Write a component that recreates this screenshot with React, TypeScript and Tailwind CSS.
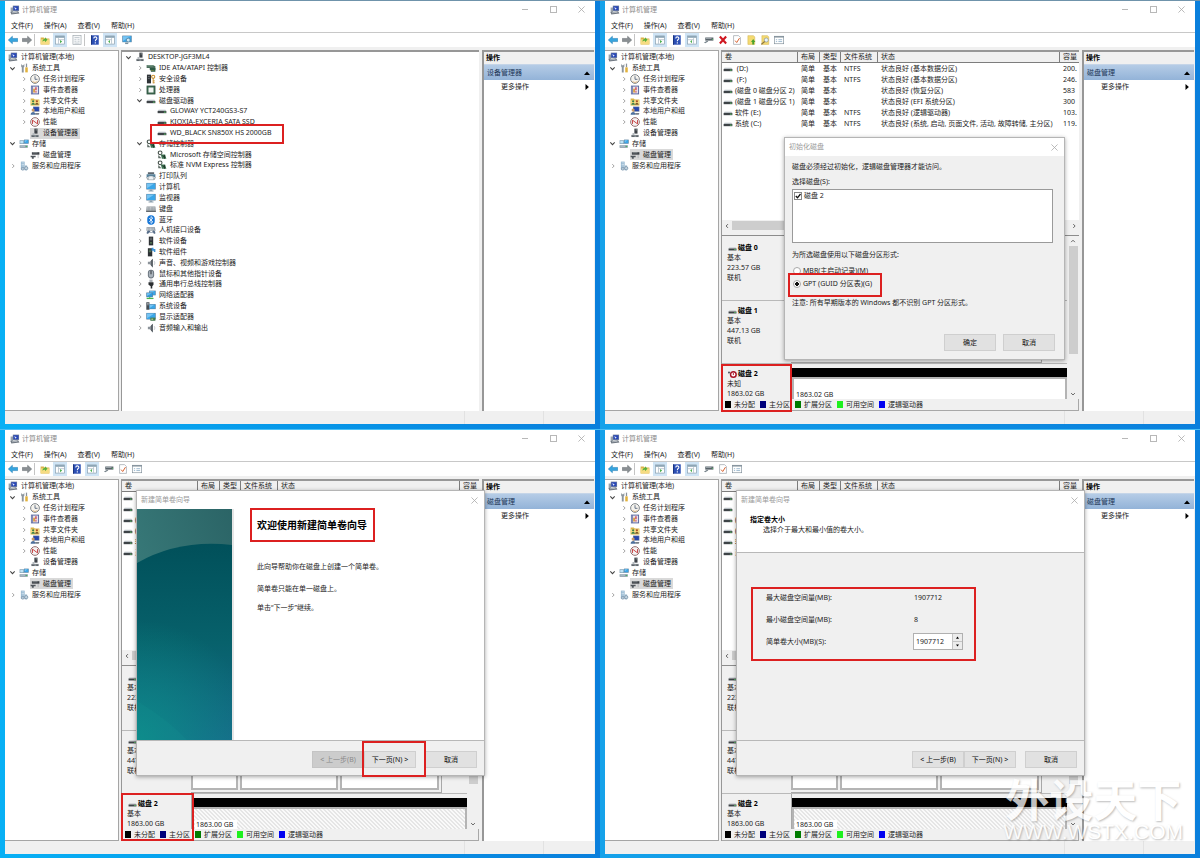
import React, { useId, useState } from "react";

type Kids = { children?: React.ReactNode };

/* ---------- icons ---------- */

const screen = (x: number, y: number, w: number, h: number, fill = "#3aa6e8") => (
  <>
    <rect x={x} y={y} width={w} height={h} fill="#5b7f9c" />
    <rect x={x + 0.8} y={y + 0.8} width={w - 1.6} height={h - 1.6} fill={fill} />
    <path d={`M${x + 1} ${y + h - 2}L${x + w - 2} ${y + 1}H${x + 1}z`} fill="#9ed8fa" opacity=".6" />
  </>
);

const folder = (
  <>
    <path d="M1 4h5l1.500 1.500H15V15H1z" fill="#d9b44a" />
    <path d="M1 7h14v8H1z" fill="#f6dc82" />
  </>
);

const paneWindow = (accent: string, flip: boolean) => (
  <>
    <rect x="1" y="1.500" width="14" height="13" fill="#fff" stroke="#8298a8" />
    <rect x="1" y="1.500" width="14" height="3" fill="#8ea6b6" />
    <path d={flip ? "M10.500 5v9M1 7.500h9" : "M5.500 5v9M6 7.500h9"} stroke="#9aabb8" />
    <path d={flip ? "M8 8l-3 2.500 3 2.500z" : "M8 8l3.500 2.500L8 13z"} fill={accent} />
  </>
);

const icons: Record<string, React.ReactNode> = {
  computer: (
    <>
      <path d="M1 4h4v9H1z" fill="#9aa3ab" />
      <rect x="4.500" y="1" width="10" height="8.500" fill="#6d7c98" />
      <rect x="5.500" y="2" width="8" height="6.500" fill="#2847b8" />
      <path d="M7 3l4 3-2 .5L8.500 8z" fill="#e8eefc" />
      <path d="M1 11l12-1 2 3.500-13 1.500z" fill="#6e7680" />
      <path d="M3 12.500l9-.8" stroke="#d7dde2" />
    </>
  ),
  tools: (
    <>
      <path d="M3.500 1v5l1 1V15H7.500V7l1-1V1L7 3.500H5z" fill="#8b949c" />
      <path d="M11 1h2v6h-2z" fill="#8b9299" />
      <path d="M10 7h4v8h-4z" fill="#e2b23c" />
    </>
  ),
  clock: (
    <>
      <circle cx="8" cy="8" r="7" fill="#f5f3ee" stroke="#80868b" strokeWidth="1.600" />
      <path d="M8 3.500V8.500h4" fill="none" stroke="#4b5b74" strokeWidth="1.300" />
      <path d="M4 12a6 6 0 0 0 8 0" stroke="#d89c50" fill="none" />
    </>
  ),
  event: (
    <>
      <rect x="1.500" y="1" width="13" height="14" fill="#57629c" />
      <rect x="4.500" y="2.500" width="8.500" height="11" fill="#e6e4ee" />
      <path d="M9.500 3.500v5M9.500 10v2" stroke="#cc3340" strokeWidth="2" />
      <path d="M5 12h3V6H5z" fill="#d8a048" />
      <path d="M3 2v12" stroke="#b9c0df" />
    </>
  ),
  share: (
    <>
      {folder}
      <circle cx="5" cy="8.500" r="1.800" fill="#3c7f46" />
      <path d="M2 14c0-4 6-4 6 0z" fill="#3c7f46" />
      <circle cx="11" cy="8.500" r="1.800" fill="#a85028" />
      <path d="M8 14c0-4 6-4 6 0z" fill="#7a5a2a" />
    </>
  ),
  users: (
    <>
      <rect x="5" y="1" width="10" height="8" fill="#5d6e96" />
      <rect x="6" y="2" width="8" height="6" fill="#2746ae" />
      <circle cx="5" cy="6.500" r="2.500" fill="#c89a68" />
      <path d="M1 14c0-6 8-6 8 0z" fill="#4d6f9c" />
      <path d="M8 11h7l-1 3H9z" fill="#777f88" />
    </>
  ),
  perf: (
    <>
      <circle cx="8" cy="8" r="7" fill="#f4f2f2" stroke="#8b6060" strokeWidth="1.400" />
      <path d="M4 11V5l8 6V5" fill="none" stroke="#c43d3d" strokeWidth="1.500" />
    </>
  ),
  device: (
    <>
      <rect x="7" y="1" width="5" height="8" fill="#3d4247" />
      <path d="M9 3h2" stroke="#c9ced2" />
      <path d="M2 11h12v3.500H2z" fill="#8a9197" />
      <path d="M4 8h3v4H4z" fill="#b4babf" />
      <path d="M3 13h4M10 13h3" stroke="#3a3f44" strokeWidth="1.300" />
    </>
  ),
  storage: (
    <>
      <path d="M1 2h7v6H1z" fill="#7f9db2" />
      <path d="M2 3h5v4H2z" fill="#bfe3f5" />
      {screen(8, 1, 7.500, 6.500)}
      <path d="M1 10h13v4H1z" fill="#7c8f9c" />
      <path d="M2 11.500h8" stroke="#dff0f7" />
      <path d="M11 12h2" stroke="#43c455" strokeWidth="1.500" />
    </>
  ),
  diskmgmt: (
    <>
      <path d="M3 3.500h12v4H3z" fill="#3c4146" />
      <path d="M4 4.500h8" stroke="#a9b0b6" />
      <path d="M1 9h8v2.500H6V14H3v-2.500H1z" fill="#50565c" />
      <path d="M13 8v5" stroke="#9aa1a7" />
    </>
  ),
  services: (
    <>
      <path d="M3 1h6v13H3z" fill="#8fb2cc" />
      <path d="M4 3h4M4 5.500h4M4 8h4" stroke="#e9f4fb" />
      <path d="M9 7h4v8H9z" fill="#a9c0d2" />
      <circle cx="11.500" cy="11.500" r="2.600" fill="#c3d5e2" stroke="#7b95aa" strokeWidth="1.300" />
      <circle cx="6" cy="12.500" r="2.300" fill="#b4c7d6" stroke="#7b95aa" />
    </>
  ),
  ide: (
    <>
      <path d="M1 3h10l4 2v6H6V8H1z" fill="#4a6d5b" />
      <path d="M2 4.500h9" stroke="#a8c9b6" />
      <path d="M6 8h9v6H8z" fill="#2d5a45" />
      <path d="M8 12h6" stroke="#c2b04a" strokeDasharray="1 1" />
    </>
  ),
  security: (
    <>
      <rect x="1.500" y="1" width="6.500" height="14" fill="#2f3337" />
      <path d="M3 4h3M3 7h3" stroke="#8b9298" />
      <circle cx="11.500" cy="4.500" r="2.500" fill="none" stroke="#c98f2e" strokeWidth="1.700" />
      <path d="M11.500 7v8M11.500 11h2.500M11.500 14h2.500" stroke="#c98f2e" strokeWidth="1.500" />
    </>
  ),
  cpu: (
    <>
      <rect x="1.500" y="1.500" width="13" height="13" fill="#3d6a50" stroke="#28493a" />
      <rect x="4" y="4" width="8" height="8" fill="#f1f4f2" />
    </>
  ),
  disk: (
    <>
      <path d="M2.500 6h11l1.500 2H1z" fill="#b9bfc4" />
      <path d="M1 8h14v3.500H1z" fill="#3e4347" />
      <path d="M11 9.800h3" stroke="#5fd06d" strokeWidth="1.400" />
    </>
  ),
  diskBad: (
    <>
      <path d="M0 3h4v3H0z" fill="#59606a" />
      <circle cx="9.500" cy="8" r="5" fill="#fff" stroke="#a81426" strokeWidth="2.600" />
      <path d="M9.500 5v4" stroke="#a81426" strokeWidth="1.600" />
    </>
  ),
  controller: (
    <>
      <circle cx="5" cy="4.500" r="3" fill="none" stroke="#44504a" strokeWidth="1.700" />
      <path d="M2 8l5 5h-5z" fill="#5c6a63" />
      <path d="M6 7h7l2 7H8z" fill="#3f7353" />
      <path d="M9 9l4 3M12 8v6" stroke="#1c3327" strokeWidth="1.300" />
    </>
  ),
  printer: (
    <>
      <path d="M3 2h10v3H3z" fill="#5d666e" />
      <path d="M1 5h14v5h-2.500L11 8H5l-1.500 2H1z" fill="#57819a" />
      <path d="M5 8h6l1.500 6h-9z" fill="#eef3f6" stroke="#7b878f" strokeWidth=".8" />
      <path d="M1 10l2 4M15 10l-2 4" stroke="#4b555c" />
    </>
  ),
  monitor: (
    <>
      {screen(0.5, 1.5, 15, 10.5)}
      <path d="M6 12h4v1.500h2V15H4v-1.500h2z" fill="#8fa2b0" />
    </>
  ),
  keyboard: (
    <>
      <path d="M1 4h14l.8 8H.2z" fill="#8d949a" />
      <path d="M2 5.500h12M2 7.500h12M2 9.500h12" stroke="#e4e8eb" strokeDasharray="1.600 .6" />
      <path d="M.2 11h15.600v1.500H.2z" fill="#4c5257" />
    </>
  ),
  bluetooth: (
    <>
      <rect x="2" y=".5" width="12" height="15" rx="6" fill="#1878d8" />
      <path d="M5 5l6 6-3 2.500V2.500L11 5l-6 6" fill="none" stroke="#fff" strokeWidth="1.200" />
    </>
  ),
  hid: (
    <>
      <path d="M1 3h13l1.500 6H.5z" fill="#9aa3ab" />
      <path d="M2 5h11M2 7h11" stroke="#eceff1" strokeDasharray="1.400 .8" />
      <path d="M1 13c0-6 6-5 6-2h3c0-3 5-4 5 2-1 2-3 1-3.500-1H5C4 14 2 15 1 13z" fill="#566c88" />
    </>
  ),
  box: (
    <>
      <rect x="4.500" y="1" width="7" height="14" fill="#2c3034" />
      <path d="M6 3.500h4M6 6h4" stroke="#949ba1" />
      <rect x="7" y="10" width="2" height="2" fill="#77b46d" />
    </>
  ),
  component: (
    <>
      <rect x="3" y="2" width="7" height="13" fill="#2c3034" />
      <path d="M4.500 5h4M4.500 7.500h4" stroke="#7bb07a" />
      <path d="M9 1h3v2h3v5h-2.500V6H9z" fill="#3b92d6" />
    </>
  ),
  speaker: (
    <>
      <path d="M3 6h3l5-5v14l-5-5H3z" fill="#8c939a" />
      <path d="M8 4l3-3v14l-3-3z" fill="#5b6268" />
      <path d="M13 5c1.500 2 1.500 4 0 6" stroke="#a9b0b6" fill="none" />
    </>
  ),
  mouse: (
    <>
      <rect x="3" y="1" width="10" height="14" rx="5" fill="#69737d" />
      <rect x="4.500" y="2.500" width="7" height="11" rx="3.500" fill="#aab3bc" />
      <path d="M8 2.500v6" stroke="#353b41" strokeWidth="1.700" />
    </>
  ),
  usb: (
    <>
      <rect x="5.500" y="1" width="5" height="4" fill="#a8aeb4" />
      <path d="M4 5h8v4l-2 2.500v3.500H7.500v-3.500L4 9z" fill="#2b2e31" />
    </>
  ),
  network: (
    <>
      {screen(5, 1, 10.5, 7.5)}
      {screen(0.5, 4, 10.5, 7.5, "#2f9be0")}
      <path d="M1 13.500h11" stroke="#4cb34f" strokeWidth="2" />
      <path d="M6 11v2.500" stroke="#4cb34f" strokeWidth="1.500" />
    </>
  ),
  system: (
    <>
      <rect x=".5" y="2" width="5" height="12" fill="#454c52" />
      <path d="M1.500 4h3M1.500 6h3" stroke="#c3cad0" />
      {screen(5, 5, 10.5, 8)}
    </>
  ),
  display: (
    <>
      {screen(0.5, 1.5, 15, 10.5)}
      <path d="M7 9h8v5H7z" fill="#447a4b" />
      <path d="M8.500 11.500h3" stroke="#cfe6b7" strokeWidth="1.500" />
    </>
  ),
  back: <path d="M.5 8L7 2v3.500h8.500v5H7V14z" fill="#36a4de" stroke="#1b78b0" strokeWidth=".8" />,
  forward: <path d="M15.500 8L9 2v3.500H.5v5H9V14z" fill="#8a8f93" stroke="#63686c" strokeWidth=".8" />,
  folderUp: (
    <>
      {folder}
      <path d="M4 11c0-4 2-5 4-5V3.500l4 4-4 4V9c-2 0-3 0-4 2z" fill="#5bb03a" />
    </>
  ),
  paneLeft: paneWindow("#4caf50", false),
  paneRight: paneWindow("#4caf50", true),
  properties: (
    <>
      <rect x="1.500" y="1" width="13" height="14" fill="#f6f7f8" stroke="#98a1a8" />
      <path d="M4 4h8M4 7h3M9 7h3M4 10h3M9 10h3M4 13h8" stroke="#a8b4bd" />
    </>
  ),
  help: (
    <>
      <rect x="2" y=".5" width="12" height="15" fill="#2c4fb4" />
      <path d="M2.500 .5v15" stroke="#17307c" strokeWidth="1.600" />
      <path d="M6 5.500c0-3.300 5-3.200 5-.3C11 7.500 8.500 7 8.500 10M8.500 11.500v2" fill="none" stroke="#fff" strokeWidth="1.700" />
    </>
  ),
  scan: (
    <>
      {screen(0.5, 1, 15, 10.5)}
      <circle cx="10" cy="8" r="3" fill="#cdeaf9" stroke="#52738a" />
      <path d="M5 12h5v2.500H5z" fill="#79909f" />
    </>
  ),
  drive: (
    <>
      <path d="M2 4h13v5H2z" fill="#59636a" />
      <path d="M3 5.500h9" stroke="#c6cdd2" />
      <path d="M13 7h1.500" stroke="#55c766" strokeWidth="1.500" />
      <path d="M0 12l5-3 2 1.500L2 13z" fill="#77838b" />
    </>
  ),
  cross: <path d="M3 2.500l10 11M13 2.500l-10 11" stroke="#cf1720" strokeWidth="3.400" />,
  checkDoc: (
    <>
      <path d="M2.500 1h8l3 3v11h-11z" fill="#fff" stroke="#9299a0" />
      <path d="M5 9l2.500 3L12 5" fill="none" stroke="#d9622e" strokeWidth="1.600" />
    </>
  ),
  sheetUp: (
    <>
      <path d="M3 1h9l2 2v12H3z" fill="#f4da72" stroke="#d3b14c" strokeWidth=".8" />
      <path d="M10 15V11H8l3.500-4.500L15 11h-2v4z" fill="#4aa32c" />
    </>
  ),
  sheetFind: (
    <>
      <path d="M3 1h9l2 2v12H3z" fill="#f4da72" stroke="#d3b14c" strokeWidth=".8" />
      <circle cx="10" cy="8" r="3.300" fill="#e7f4fb" stroke="#7e8b94" />
      <path d="M7.500 10.500L2 15" stroke="#8d7640" strokeWidth="2" />
    </>
  ),
  listWindow: (
    <>
      <rect x=".5" y="2" width="15" height="12" fill="#fff" stroke="#7b8a95" />
      <path d="M.5 3h15" stroke="#7b8a95" strokeWidth="2" />
      <path d="M3 7.500h2M3 10.500h2M7 7.500h6M7 10.500h6" stroke="#6a93b4" />
    </>
  ),
};

function Icon({ name, className = "w-[10px] h-[10px]" }: { name: string; className?: string }) {
  return (
    <svg viewBox="0 0 16 16" aria-hidden="true" className={`shrink-0 ${className}`}>
      {icons[name]}
    </svg>
  );
}

function Arrow({ dir, className = "w-[6px] h-[6px]" }: { dir: "up" | "down" | "left" | "right"; className?: string }) {
  const d = {
    up: "M1.500 5.500L4 3l2.500 2.500",
    down: "M1.500 2.800L4 5.300l2.500-2.500",
    left: "M5.300 1.500L2.800 4l2.500 2.500",
    right: "M3 1.500L5.500 4 3 6.500",
  }[dir];
  return (
    <svg viewBox="0 0 8 8" aria-hidden="true" className={`shrink-0 ${className}`}>
      <path d={d} fill="none" stroke="currentColor" strokeWidth="1.200" />
    </svg>
  );
}

function CloseGlyph() {
  return (
    <svg viewBox="0 0 8 8" aria-hidden="true" className="h-[7px] w-[7px]">
      <path d="M.5 .5l7 7M7.500 .5l-7 7" stroke="currentColor" strokeWidth=".9" />
    </svg>
  );
}

/* ---------- trees ---------- */

type Node = { icon: string; text: string; level: 0 | 1 | 2 | 3; state?: "open" | "closed" };

const indent = ["pl-[2px]", "pl-[3px]", "pl-[14px]", "pl-[25px]"];

const consoleTree: Node[] = [
  { icon: "computer", text: "计算机管理(本地)", level: 0 },
  { icon: "tools", text: "系统工具", level: 1, state: "open" },
  { icon: "clock", text: "任务计划程序", level: 2, state: "closed" },
  { icon: "event", text: "事件查看器", level: 2, state: "closed" },
  { icon: "share", text: "共享文件夹", level: 2, state: "closed" },
  { icon: "users", text: "本地用户和组", level: 2, state: "closed" },
  { icon: "perf", text: "性能", level: 2, state: "closed" },
  { icon: "device", text: "设备管理器", level: 2 },
  { icon: "storage", text: "存储", level: 1, state: "open" },
  { icon: "diskmgmt", text: "磁盘管理", level: 2 },
  { icon: "services", text: "服务和应用程序", level: 1, state: "closed" },
];

const closed = (icon: string, text: string): Node => ({ icon, text, level: 2, state: "closed" });

const deviceTree: Node[] = [
  { icon: "device", text: "DESKTOP-JGF3ML4", level: 1, state: "open" },
  closed("ide", "IDE ATA/ATAPI 控制器"),
  closed("security", "安全设备"),
  closed("cpu", "处理器"),
  { icon: "disk", text: "磁盘驱动器", level: 2, state: "open" },
  { icon: "disk", text: "GLOWAY YCT240GS3-S7", level: 3 },
  { icon: "disk", text: "KIOXIA-EXCERIA SATA SSD", level: 3 },
  { icon: "disk", text: "WD_BLACK SN850X HS 2000GB", level: 3 },
  { icon: "controller", text: "存储控制器", level: 2, state: "open" },
  { icon: "controller", text: "Microsoft 存储空间控制器", level: 3 },
  { icon: "controller", text: "标准 NVM Express 控制器", level: 3 },
  closed("printer", "打印队列"),
  closed("monitor", "计算机"),
  closed("monitor", "监视器"),
  closed("keyboard", "键盘"),
  closed("bluetooth", "蓝牙"),
  closed("hid", "人机接口设备"),
  closed("box", "软件设备"),
  closed("component", "软件组件"),
  closed("speaker", "声音、视频和游戏控制器"),
  closed("mouse", "鼠标和其他指针设备"),
  closed("usb", "通用串行总线控制器"),
  closed("network", "网络适配器"),
  closed("system", "系统设备"),
  closed("display", "显示适配器"),
  closed("speaker", "音频输入和输出"),
];

function Tree({ nodes, selected, className }: { nodes: Node[]; selected?: string; className: string }) {
  return (
    <ul className={`grid auto-rows-fr ${className}`}>
      {nodes.map((n, i) => (
        <li key={i} className={`flex min-h-0 items-center gap-[3px] ${indent[n.level]}`}>
          {n.level > 0 && (
            <span className={`flex w-[7px] shrink-0 justify-center ${n.state === "open" ? "text-[#444]" : "text-[#999]"}`}>
              {n.state && (
                <Arrow
                  dir={n.state === "open" ? "down" : "right"}
                  className={n.state === "open" ? "h-[7px] w-[7px]" : "h-[6px] w-[6px]"}
                />
              )}
            </span>
          )}
          <span className={`flex h-full items-center gap-[3px] pr-[2px] ${n.text === selected ? "bg-[#d9d9d9]" : ""}`}>
            <Icon name={n.icon} />
            <span>{n.text}</span>
          </span>
        </li>
      ))}
    </ul>
  );
}

/* ---------- window frame ---------- */

type Tool = { icon: string; label: string; on?: boolean; sep?: boolean };

const baseTools: Tool[] = [
  { icon: "back", label: "后退" },
  { icon: "forward", label: "前进", sep: true },
  { icon: "folderUp", label: "上移一级" },
  { icon: "paneLeft", label: "显示/隐藏控制台树", on: true },
];
const deviceTools: Tool[] = [
  ...baseTools,
  { icon: "properties", label: "属性", sep: true },
  { icon: "help", label: "帮助" },
  { icon: "paneRight", label: "显示/隐藏操作窗格", on: true },
  { icon: "scan", label: "扫描硬件改动" },
];
const diskTools: Tool[] = [
  ...baseTools,
  { icon: "help", label: "帮助" },
  { icon: "paneRight", label: "显示/隐藏操作窗格", on: true },
  { icon: "drive", label: "刷新" },
];
const diskToolsFull: Tool[] = [
  ...diskTools,
  { icon: "cross", label: "删除" },
  { icon: "checkDoc", label: "检查" },
  { icon: "sheetUp", label: "上移" },
  { icon: "sheetFind", label: "查找" },
  { icon: "listWindow", label: "列表" },
];
const diskToolsShort: Tool[] = [...diskTools, { icon: "checkDoc", label: "检查" }, { icon: "listWindow", label: "列表" }];

function Toolbar({ tools }: { tools: Tool[] }) {
  return (
    <div className="flex h-[14px] items-center bg-white pl-px">
      {tools.map((t) => (
        <React.Fragment key={t.icon}>
          <button
            type="button"
            aria-label={t.label}
            className={`flex h-[14px] w-[14px] shrink-0 items-center justify-center ${t.on ? "mr-[3px] ml-px bg-[#cfe4f5]" : ""}`}
          >
            <Icon name={t.icon} />
          </button>
          {t.sep && <span className="mr-[3px] h-[12px] w-px bg-[#c4c4c4]" />}
        </React.Fragment>
      ))}
    </div>
  );
}

function Mark({ className }: { className: string }) {
  return <div className={`pointer-events-none absolute z-20 border-2 border-[#dc2020] ${className}`} />;
}

function ManagementWindow({
  tools,
  selected,
  overlay,
  children,
  backdrop,
}: { tools: Tool[]; selected: string; overlay?: React.ReactNode; backdrop: string } & Kids) {
  return (
    <section className={`relative flex min-h-0 min-w-0 flex-col border-t px-[5px] ${backdrop}`}>
      <div className="flex min-h-0 flex-1 flex-col bg-white">
        <header className="flex h-[17px] items-center pl-[5px] text-[#8c8c8c]">
          <div className="flex flex-1 items-center gap-[2px]">
            <Icon name="computer" />
            <h1>计算机管理</h1>
          </div>
          <button type="button" aria-label="最小化" className="flex w-[28px] justify-center text-[#b8b8b8]">
            <span className="h-px w-[6px] bg-current" />
          </button>
          <button type="button" aria-label="最大化" className="flex w-[28px] justify-center text-[#b8b8b8]">
            <span className="h-[7px] w-[7px] border border-current" />
          </button>
          <button type="button" aria-label="关闭" className="flex w-[28px] justify-center text-[#a8a8a8]">
            <CloseGlyph />
          </button>
        </header>
        <nav className="flex h-[15px] items-center gap-[11px] border-b border-[#c8c8c8] pt-[2px] pl-[6px]">
          {["文件(F)", "操作(A)", "查看(V)", "帮助(H)"].map((m) => (
            <button key={m} type="button">
              {m}
            </button>
          ))}
        </nav>
        <Toolbar tools={tools} />
        <div className="flex min-h-0 flex-1 bg-[#f0f0f0] pt-[3px] pr-px">
          <aside className="w-[114px] shrink-0 border-t border-r border-b border-[#a5a5a5] bg-white pt-px">
            <Tree nodes={consoleTree} selected={selected} className="h-[119px] pl-px" />
          </aside>
          <main className="mr-[3px] ml-[2px] flex min-w-0 flex-1 flex-col border-t-2 border-l border-[#979797] bg-white">
            {children}
          </main>
          <aside className="w-[112px] shrink-0 border-t-2 border-l-2 border-[#979797] bg-white">
            <h2 className="h-[12px] bg-[#f0f0f0] pl-[2px] leading-[12px] font-bold text-black">操作</h2>
            <button
              type="button"
              className="flex h-[16px] w-full items-center justify-between border-t border-[#c5d5e8] bg-linear-to-b from-[#b5cce6] to-[#93b3d8] pr-[4px] pl-[3px] text-[#1c3556]"
            >
              {selected}
              <svg viewBox="0 0 8 8" aria-hidden="true" className="h-[6px] w-[6px]">
                <path d="M0 6.500L4 2l4 4.500z" fill="#000" />
              </svg>
            </button>
            <button type="button" className="flex h-[14px] w-full items-center justify-between pr-[4px] pl-[17px]">
              更多操作
              <svg viewBox="0 0 8 8" aria-hidden="true" className="h-[6px] w-[6px]">
                <path d="M2 0l4.500 4L2 8z" fill="#000" />
              </svg>
            </button>
          </aside>
        </div>
        <footer className="flex h-[13px] shrink-0 justify-end bg-[#f0f0f0] pr-[51px]">
          <span className="w-[80px] border-x border-[#e2e2e2]" />
        </footer>
      </div>
      {overlay}
    </section>
  );
}

/* ---------- disk management ---------- */

const volumes = [
  [" (D:)", "简单", "基本", "NTFS", "状态良好 (基本数据分区)", "200."],
  [" (F:)", "简单", "基本", "NTFS", "状态良好 (基本数据分区)", "246."],
  ["(磁盘 0 磁盘分区 2)", "简单", "基本", "", "状态良好 (恢复分区)", "583"],
  ["(磁盘 1 磁盘分区 1)", "简单", "基本", "", "状态良好 (EFI 系统分区)", "300"],
  ["软件 (E:)", "简单", "基本", "NTFS", "状态良好 (逻辑驱动器)", "103."],
  ["系统 (C:)", "简单", "基本", "NTFS", "状态良好 (系统, 启动, 页面文件, 活动, 故障转储, 主分区)", "119."],
];

const columns = [
  { name: "卷", width: "w-[76px]" },
  { name: "布局", width: "w-[22px]" },
  { name: "类型", width: "w-[21px]" },
  { name: "文件系统", width: "w-[37px]" },
  { name: "状态", width: "" },
  { name: "容量", width: "w-[19px]" },
];

const legend = [
  ["bg-black", "未分配"],
  ["bg-[#00007b]", "主分区"],
  ["bg-[#007b00]", "扩展分区"],
  ["bg-[#1ef01e]", "可用空间"],
  ["bg-[#0000f0]", "逻辑驱动器"],
];

function DiskLabel({ icon = "disk", lines }: { icon?: string; lines: string[] }) {
  return (
    <div className="w-[69px] shrink-0 pt-[5px] pl-[5px] leading-[10px]">
      <div className="flex items-center gap-px pl-px font-bold text-black">
        <Icon name={icon} className="h-[9px] w-[9px]" />
        {lines[0]}
      </div>
      {lines.slice(1).map((l) => (
        <div key={l}>{l}</div>
      ))}
    </div>
  );
}

function Partitions() {
  const part = "border-2 border-[#b4b4b4] bg-white";
  return (
    <div className="flex w-[251px] gap-[2px] border-r border-b border-[#a8a8a8] bg-[#f0f0f0] pt-[4px] pr-[2px] pb-[2px]">
      <div className={`w-[47px] ${part}`} />
      <div className={`w-[98px] ${part}`} />
      <div className={`flex-1 ${part}`} />
    </div>
  );
}

function DiskView({ initialized }: { initialized: boolean }) {
  const size = initialized ? "1863.00 GB" : "1863.02 GB";
  return (
    <>
      <div className="min-h-0 flex-1 overflow-hidden">
        <table className="w-full table-fixed border-separate border-spacing-0 text-left">
          <thead>
            <tr className="bg-[#f0f0f0]">
              {columns.map((c) => (
                <th
                  key={c.name}
                  className={`h-[11px] border-r border-b border-[#7d7d7d] p-0 pl-[3px] leading-[10px] font-normal whitespace-nowrap last:border-r-0 ${c.width}`}
                >
                  {c.name}
                </th>
              ))}
            </tr>
          </thead>
          <tbody>
            {volumes.map((v) => (
              <tr key={v[0]}>
                {v.map((cell, i) => (
                  <td key={i} className="h-[11px] p-0 pl-[3px] leading-[11px] whitespace-pre first:pl-px">
                    {i === 0 ? (
                      <span className="flex items-center gap-[2px]">
                        <Icon name="disk" />
                        {cell}
                      </span>
                    ) : (
                      cell
                    )}
                  </td>
                ))}
              </tr>
            ))}
          </tbody>
        </table>
      </div>
      <div className="flex h-[11px] shrink-0 items-center justify-between bg-[#f0f0f0] px-[2px] text-[#555]">
        <Arrow dir="left" />
        <span className="mr-[52px] ml-[2px] h-[9px] flex-1 bg-[#cdcdcd]" />
        <Arrow dir="right" />
      </div>
      <div className="h-[5px] shrink-0 border-b border-[#8c8c8c] bg-[#f0f0f0]" />
      <div className="flex h-[163px] shrink-0 overflow-hidden bg-[#f0f0f0]">
        <div className="min-w-0 flex-1 pt-[2px]">
          <div className="flex h-[63px] border-b border-[#b9b9b9]">
            <DiskLabel lines={["磁盘 0", "基本", "223.57 GB", "联机"]} />
            <Partitions />
          </div>
          <div className="flex h-[63px] border-b border-[#b9b9b9]">
            <DiskLabel lines={["磁盘 1", "基本", "447.13 GB", "联机"]} />
            <Partitions />
          </div>
          <div className="flex h-[63px]">
            <DiskLabel icon={initialized ? "disk" : "diskBad"} lines={["磁盘 2", initialized ? "基本" : "未知", size]} />
            <div className="flex min-w-0 flex-1 flex-col border-l border-[#a8a8a8] pt-[4px]">
              <div className="h-[9px] bg-black" />
              <div
                className={`flex-1 border-t-2 border-r-2 border-l-2 border-[#b4b4b4] pt-[11px] pl-px ${
                  initialized
                    ? "bg-[linear-gradient(45deg,#e6e6e6_25%,#fafafa_25%_50%,#e6e6e6_50%_75%,#fafafa_75%)] bg-[length:4px_4px]"
                    : "bg-white"
                }`}
              >
                <div className="w-[42px] bg-white pl-px leading-[10px]">{size}</div>
              </div>
            </div>
          </div>
        </div>
        <div className="flex w-[12px] shrink-0 flex-col items-center justify-between py-[2px] text-[#555]">
          <Arrow dir="up" />
          <span className="mt-[2px] mb-[37px] w-[9px] flex-1 bg-[#cdcdcd]" />
          <Arrow dir="down" />
        </div>
      </div>
      <div className="flex h-[12px] shrink-0 items-center gap-[5px] border-r border-b border-[#a8a8a8] bg-[#f0f0f0] pl-[3px]">
        {legend.map(([color, text]) => (
          <span key={text} className="flex items-center gap-[3px] whitespace-nowrap">
            <span className={`h-[7px] w-[6px] ${color}`} />
            {text}
          </span>
        ))}
      </div>
    </>
  );
}

/* ---------- dialogs ---------- */

function Dialog({ title, className, children }: { title: string; className: string } & Kids) {
  return (
    <div
      role="dialog"
      aria-label={title}
      className={`absolute z-10 flex flex-col border border-[#b5b5b5] bg-[#f0f0f0] shadow-[0_1px_4px_rgba(0,0,0,0.35)] ${className}`}
    >
      <div className="flex h-[18px] shrink-0 items-center justify-between bg-white pr-[6px] pl-[4px] text-[#9a9a9a]">
        {title}
        <button type="button" aria-label="关闭" className="text-[#aaa]">
          <CloseGlyph />
        </button>
      </div>
      {children}
    </div>
  );
}

function PushButton({ children, disabled }: Kids & { disabled?: boolean }) {
  return (
    <button
      type="button"
      disabled={disabled}
      className="h-[17px] w-[52px] border border-[#cfcfcf] bg-[#e1e1e1] text-[#111] disabled:border-[#c4c4c4] disabled:bg-[#cccccc] disabled:text-[#8a8a8a]"
    >
      {children}
    </button>
  );
}

function WizardFooter({ first }: { first?: boolean }) {
  return (
    <div className="flex h-[35px] shrink-0 items-center justify-end border-t border-[#b8b8b8] bg-[#f0f0f0] pt-[3px] pr-[7px]">
      <PushButton disabled={first}>&lt; 上一步(B)</PushButton>
      <PushButton>下一页(N) &gt;</PushButton>
      <span className="w-[9px]" />
      <PushButton>取消</PushButton>
    </div>
  );
}

function InitializeDialog() {
  const id = useId();
  const [style, setStyle] = useState("gpt");
  const [checked, setChecked] = useState(true);
  const radio =
    "h-[8px] w-[8px] shrink-0 appearance-none rounded-full border border-[#a8a8a8] bg-white checked:bg-[radial-gradient(circle,#111_0_2px,#fff_2px)]";
  return (
    <Dialog title="初始化磁盘" className="top-[136px] left-[184px] h-[223px] w-[281px]">
      <div className="flex min-h-0 flex-1 flex-col px-[7px] leading-[10px]">
        <p className="mt-[6px]">磁盘必须经过初始化，逻辑磁盘管理器才能访问。</p>
        <p id={`${id}-list`} className="mt-[5px]">
          选择磁盘(S):
        </p>
        <div aria-labelledby={`${id}-list`} role="group" className="mt-[2px] mr-[4px] h-[54px] border border-[#9a9a9a] bg-white p-px">
          <label className="flex items-center gap-[2px]">
            <span className="relative flex h-[8px] w-[8px]">
              <input
                type="checkbox"
                checked={checked}
                onChange={(e) => setChecked(e.target.checked)}
                className="peer h-[8px] w-[8px] appearance-none border border-[#888] bg-white"
              />
              <svg viewBox="0 0 8 8" aria-hidden="true" className="pointer-events-none absolute inset-0 hidden h-[8px] w-[8px] peer-checked:block">
                <path d="M1.800 4l1.700 1.800L6.500 2" fill="none" stroke="#111" strokeWidth="1.300" />
              </svg>
            </span>
            磁盘 2
          </label>
        </div>
        <p className="mt-[7px]">为所选磁盘使用以下磁盘分区形式:</p>
        <label className="mt-[6px] flex items-center gap-[2px] pl-px">
          <input type="radio" name={id} checked={style === "mbr"} onChange={() => setStyle("mbr")} className={radio} />
          MBR(主启动记录)(M)
        </label>
        <label className="relative mt-[3px] flex items-center gap-[2px] pl-px">
          <input type="radio" name={id} checked={style === "gpt"} onChange={() => setStyle("gpt")} className={radio} />
          GPT (GUID 分区表)(G)
          <Mark className="-top-[6px] -left-[4px] h-[24px] w-[94px]" />
        </label>
        <p className="mt-[9px]">注意: 所有早期版本的 Windows 都不识别 GPT 分区形式。</p>
        <div className="mt-auto mb-[8px] flex justify-end gap-[7px] pr-[2px]">
          <PushButton>确定</PushButton>
          <PushButton>取消</PushButton>
        </div>
      </div>
    </Dialog>
  );
}

function WizardArt() {
  return (
    <svg viewBox="0 0 95 231" preserveAspectRatio="none" aria-hidden="true" className="h-full w-[95px] shrink-0">
      <defs>
        <linearGradient id="artTop" x1="0" y1="1" x2="1" y2="0">
          <stop offset="0" stopColor="#3f8583" />
          <stop offset="1" stopColor="#2b6466" />
        </linearGradient>
        <linearGradient id="artBody" x1="0" y1="0" x2="0" y2="1">
          <stop offset="0" stopColor="#01505a" />
          <stop offset=".5" stopColor="#07616b" />
          <stop offset="1" stopColor="#176a8a" />
        </linearGradient>
        <radialGradient id="artGlow" cx="0" cy="231" r="120" gradientUnits="userSpaceOnUse">
          <stop offset="0" stopColor="#0b8f89" stopOpacity=".85" />
          <stop offset="1" stopColor="#0b8f89" stopOpacity="0" />
        </radialGradient>
      </defs>
      <rect width="95" height="231" fill="url(#artTop)" />
      <path d="M0 54Q42 30 95 36V231H0z" fill="url(#artBody)" />
      <path d="M0 54Q42 30 95 36V231H0z" fill="url(#artGlow)" />
      <path d="M0 192Q30 210 50 231H0z" fill="#20a79f" opacity=".1" />
    </svg>
  );
}

function WelcomeDialog() {
  return (
    <Dialog title="新建简单卷向导" className="top-[60px] left-[136px] h-[286px] w-[349px]">
      <div className="flex min-h-0 flex-1 bg-white">
        <WizardArt />
        <div className="flex flex-1 flex-col border-l-2 border-[#e6e6e6] pl-[23px] leading-[10px]">
          <div className="relative mt-[9px] text-[10px] leading-[14px] font-bold whitespace-nowrap text-black">
            欢迎使用新建简单卷向导
            <Mark className="-top-[10px] -left-[7px] h-[34px] w-[125px]" />
          </div>
          <p className="mt-[30px]">此向导帮助你在磁盘上创建一个简单卷。</p>
          <p className="mt-[12px]">简单卷只能在单一磁盘上。</p>
          <p className="mt-[9px]">单击“下一步”继续。</p>
        </div>
      </div>
      <WizardFooter first />
      <Mark className="right-[58px] -bottom-[2px] h-[36px] w-[64px]" />
    </Dialog>
  );
}

function SizeDialog() {
  const id = useId();
  const [size, setSize] = useState(1907712);
  const step = (n: number) => setSize((s) => Math.min(1907712, Math.max(8, s + n)));
  return (
    <Dialog title="新建简单卷向导" className="top-[60px] left-[136px] h-[286px] w-[349px]">
      <div className="h-[44px] shrink-0 border-b border-[#b8b8b8] bg-white pt-[6px] pl-[13px] leading-[10px]">
        <h3 className="font-bold text-black">指定卷大小</h3>
        <p className="pl-[13px]">选择介于最大和最小值的卷大小。</p>
      </div>
      <div className="flex-1 pt-[34px] pl-[14px]">
        <div className="flex h-[74px] w-[225px] flex-col gap-[5px] border-2 border-[#dc2020] pl-[13px]">
          <div className="flex h-[17px] items-center">
            <span className="w-[148px]">最大磁盘空间量(MB):</span>
            <span>1907712</span>
          </div>
          <div className="flex h-[17px] items-center">
            <span className="w-[148px]">最小磁盘空间量(MB):</span>
            <span>8</span>
          </div>
          <div className="flex h-[17px] items-center">
            <label htmlFor={id} className="w-[147px]">
              简单卷大小(MB)(S):
            </label>
            <div className="flex h-[17px] w-[50px] border border-[#b0b0b0] bg-white">
              <input
                id={id}
                value={size}
                onChange={(e) => setSize(Number(e.target.value) || 0)}
                className="w-0 min-w-0 flex-1 bg-white pl-[2px] outline-none"
              />
              <div className="flex w-[10px] flex-col divide-y divide-[#c4c4c4] border-l border-[#c4c4c4] bg-[#ececec]">
                <button type="button" aria-label="增加" onClick={() => step(1)} className="flex flex-1 items-center justify-center">
                  <svg viewBox="0 0 4 4" aria-hidden="true" className="h-[3px] w-[3px]">
                    <path d="M0 3.500L2 .8l2 2.700z" />
                  </svg>
                </button>
                <button type="button" aria-label="减少" onClick={() => step(-1)} className="flex flex-1 items-center justify-center">
                  <svg viewBox="0 0 4 4" aria-hidden="true" className="h-[3px] w-[3px]">
                    <path d="M0 .5l2 2.700L4 .5z" />
                  </svg>
                </button>
              </div>
            </div>
          </div>
        </div>
      </div>
      <WizardFooter />
    </Dialog>
  );
}

function Watermark() {
  return (
    <div className="pointer-events-none absolute right-[17px] bottom-[17px] z-30 flex flex-col items-center text-white opacity-75 [text-shadow:1px_1px_2px_rgba(0,0,0,0.35)]">
      <span className="text-[44px] leading-[44px] font-bold">外设天下</span>
      <span className="font-['Liberation_Sans'] text-[21px] leading-[19px]">WWW.WSTX.COM</span>
    </div>
  );
}

export default function App() {
  return (
    <div className="grid h-screen min-h-[780px] grid-cols-2 grid-rows-2 overflow-hidden bg-[#0b93e0] font-['Noto_Sans','Noto_Sans_CJK_SC',sans-serif] text-[7px] leading-[10px] text-[#1c1c1c]">
      <ManagementWindow
        tools={deviceTools}
        selected="设备管理器"
        backdrop="border-[#6f93ab] pb-[5px] bg-linear-to-r from-[#08b0f5] to-[#0a7fdc]"
        overlay={<Mark className="top-[123px] left-[150px] h-[20px] w-[134px]" />}
      >
        <Tree nodes={deviceTree} className="h-[281px]" />
      </ManagementWindow>
      <ManagementWindow
        tools={diskToolsFull}
        selected="磁盘管理"
        backdrop="border-[#6f93ab] pb-[5px] bg-linear-to-r from-[#15a2ea] to-[#0a7fdc]"
        overlay={
          <>
            <InitializeDialog />
            <Mark className="bottom-[17px] left-[121px] h-[48px] w-[71px]" />
          </>
        }
      >
        <DiskView initialized={false} />
      </ManagementWindow>
      <ManagementWindow
        tools={diskToolsShort}
        selected="磁盘管理"
        backdrop="border-[#4cc0f5] pb-[4px] bg-linear-to-r from-[#08b0f5] to-[#0a7fdc]"
        overlay={
          <>
            <WelcomeDialog />
            <Mark className="bottom-[17px] left-[121px] h-[48px] w-[73px]" />
          </>
        }
      >
        <DiskView initialized />
      </ManagementWindow>
      <ManagementWindow
        tools={diskToolsShort}
        selected="磁盘管理"
        backdrop="border-[#4cc0f5] pb-[4px] bg-linear-to-r from-[#15a2ea] to-[#0a7fdc]"
        overlay={
          <>
            <SizeDialog />
            <Watermark />
          </>
        }
      >
        <DiskView initialized />
      </ManagementWindow>
    </div>
  );
}
